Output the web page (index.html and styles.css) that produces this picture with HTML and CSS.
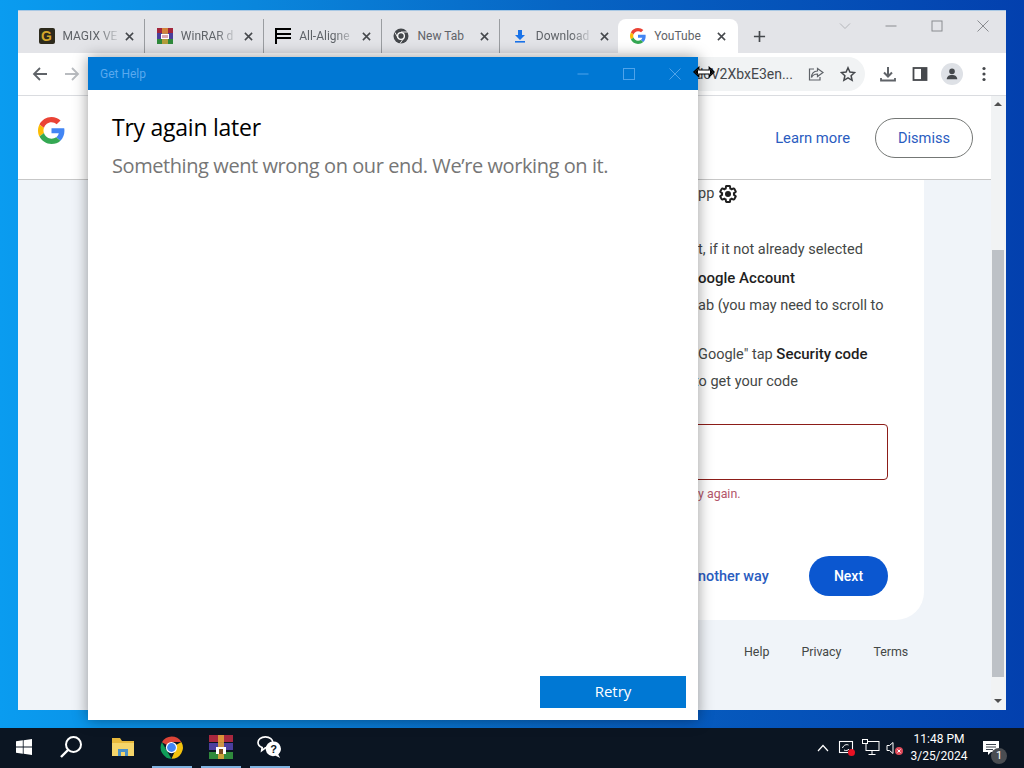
FILE: index.html
```html
<!DOCTYPE html>
<html lang="en">
<head>
  <meta charset="UTF-8" />
  <title>Get Help</title>
  <link rel="stylesheet" href="styles.css">
</head>
<body>

  <svg class="defs" width="0" height="0">
    <symbol id="x" viewBox="0 0 10 10"><path d="M1 1l8 8M9 1l-8 8" fill="none" stroke="currentColor" stroke-width="1.7"/></symbol>
    <symbol id="g" viewBox="0 0 48 48">
      <path fill="#EA4335" d="M24 9.5c3.5 0 6.700 1.200 9.200 3.600l6.900-6.900C35.900 2.400 30.400 0 24 0 14.600 0 6.500 5.400 2.600 13.200l8 6.200C12.500 13.700 17.800 9.500 24 9.500z"/>
      <path fill="#4285F4" d="M47 24.500c0-1.600-.1-3.100-.4-4.500H24v9h12.900c-.6 3-2.200 5.500-4.700 7.200l7.700 6C44.400 37.900 47 31.800 47 24.500z"/>
      <path fill="#FBBC05" d="M10.500 28.600c-.5-1.400-.8-3-.8-4.600s.3-3.200.8-4.600l-8-6.200C.900 16.500 0 20.100 0 24s.9 7.500 2.600 10.800l7.900-6.200z"/>
      <path fill="#34A853" d="M24 48c6.500 0 11.900-2.100 15.900-5.800l-7.700-6c-2.200 1.400-4.900 2.300-8.200 2.300-6.200 0-11.500-4.200-13.400-9.900l-8 6.200C6.500 42.600 14.600 48 24 48z"/>
    </symbol>
  </svg>

  <div class="desktop">

    <!-- Browser window -->
    <div class="browser">
      <div class="tabstrip">
        <div class="tab">
          <span class="fav fav-magix">G</span>
          <span class="tab-title">MAGIX VE</span>
          <svg class="tab-x"><use href="#x"/></svg>
        </div>
        <div class="tab">
          <svg class="fav" viewBox="0 0 16 16">
            <rect y="0" width="16" height="5" fill="#a3263c"/><rect y="5" width="16" height="6" fill="#4a3f9b"/><rect y="11" width="16" height="5" fill="#2f8a3c"/>
            <rect x="5" width="6" height="16" fill="#e2a33a" opacity=".75"/><rect x="4" y="6" width="8" height="5" fill="#fff"/><path d="M6 7v3M8 7v3M10 7v3" stroke="#a3263c" stroke-width=".8"/>
          </svg>
          <span class="tab-title">WinRAR d</span>
          <svg class="tab-x"><use href="#x"/></svg>
        </div>
        <div class="tab">
          <svg class="fav" viewBox="0 0 16 16"><path d="M0 0h16v2H2v3h14v2H2v2h14v2H2v5H0z" fill="#000"/></svg>
          <span class="tab-title">All-Aligne</span>
          <svg class="tab-x"><use href="#x"/></svg>
        </div>
        <div class="tab">
          <svg class="fav" viewBox="0 0 16 16">
            <circle cx="8" cy="8" r="7.500" fill="#45484c"/><circle cx="8" cy="8" r="4" fill="#fff"/><circle cx="8" cy="8" r="2.700" fill="#45484c"/>
            <path d="M8 4h6.500M5 10L2 4.500M10.500 10.500l-3.500 5" stroke="#fff" stroke-width=".9"/>
          </svg>
          <span class="tab-title tab-title-full">New Tab</span>
          <svg class="tab-x"><use href="#x"/></svg>
        </div>
        <div class="tab">
          <svg class="fav" viewBox="0 0 16 16"><path d="M6 2h4v5h3l-5 5-5-5h3z" fill="#1a73e8"/><rect x="3" y="13" width="10" height="1.600" fill="#1a73e8"/></svg>
          <span class="tab-title">Download</span>
          <svg class="tab-x"><use href="#x"/></svg>
        </div>
        <div class="tab tab-active">
          <svg class="fav"><use href="#g"/></svg>
          <span class="tab-title tab-title-full">YouTube</span>
          <svg class="tab-x"><use href="#x"/></svg>
        </div>
        <svg class="new-tab" viewBox="0 0 14 14"><path d="M7 1v12M1 7h12" stroke="#45484c" stroke-width="1.800"/></svg>
        <div class="win-controls">
          <svg viewBox="0 0 12 12"><path d="M1 3.500l5 5 5-5" fill="none" stroke="#b4b6ba" stroke-width="1"/></svg>
          <svg viewBox="0 0 12 12"><path d="M.5 6h11" stroke="#8a8c90" stroke-width="1"/></svg>
          <svg viewBox="0 0 12 12"><rect x="1" y="1" width="10" height="10" fill="none" stroke="#8a8c90" stroke-width="1"/></svg>
          <svg viewBox="0 0 12 12"><path d="M.5.5l11 11M11.500.5l-11 11" stroke="#8a8c90" stroke-width="1"/></svg>
        </div>
      </div>

      <div class="toolbar">
        <svg class="nav-btn" viewBox="0 0 16 16"><path d="M15 8H2M8 2L2 8l6 6" fill="none" stroke="#5f6368" stroke-width="1.800"/></svg>
        <svg class="nav-btn" viewBox="0 0 16 16"><path d="M1 8h13M8 2l6 6-6 6" fill="none" stroke="#b9bcc0" stroke-width="1.800"/></svg>
        <div class="omnibox">
          <span class="url">dcV2XbxE3en...</span>
          <svg class="omni-icon" viewBox="0 0 16 16"><path d="M9.500 2.500L15 6.500l-5.500 4V8C6 8 4.500 9.500 3.500 11.500 3.500 8 5.500 5 9.500 5z" fill="none" stroke="#5f6368" stroke-width="1.200"/><path d="M6 3H1.500v11H12v-3" fill="none" stroke="#5f6368" stroke-width="1.200"/></svg>
          <svg class="omni-icon" viewBox="0 0 16 16"><path d="M8 1.800l1.900 4.300 4.700.5-3.500 3.100 1 4.600L8 11.900l-4.100 2.400 1-4.600-3.500-3.100 4.700-.5z" fill="none" stroke="#45484c" stroke-width="1.500"/></svg>
        </div>
        <div class="tool-icons">
          <svg viewBox="0 0 16 16"><path d="M8 1v9M4 6.500L8 10.500l4-4" fill="none" stroke="#5f6368" stroke-width="2"/><path d="M1 12v2.500h14V12" fill="none" stroke="#5f6368" stroke-width="1.800"/></svg>
          <svg viewBox="0 0 16 16"><rect x="1.500" y="2" width="13" height="12" fill="none" stroke="#45484c" stroke-width="1.800"/><rect x="9" y="2" width="6" height="12" fill="#45484c"/></svg>
          <span class="avatar">
            <svg viewBox="0 0 16 16"><circle cx="8" cy="5" r="3.200" fill="#45484c"/><path d="M2 14c0-3.500 2.500-5 6-5s6 1.500 6 5z" fill="#45484c"/></svg>
          </span>
          <svg viewBox="0 0 16 16"><circle cx="8" cy="2.500" r="1.600" fill="#45484c"/><circle cx="8" cy="8" r="1.600" fill="#45484c"/><circle cx="8" cy="13.500" r="1.600" fill="#45484c"/></svg>
        </div>
      </div>

      <div class="page">
        <div class="page-main">
          <div class="banner">
            <svg class="banner-logo"><use href="#g"/></svg>
            <a class="learn-more">Learn more</a>
            <button class="dismiss">Dismiss</button>
          </div>

          <div class="card">
            <p class="step step-first">pp
              <svg class="gear" viewBox="0 0 24 24"><path d="M19.140 12.940c.04-.3.06-.61.06-.94 0-.32-.02-.64-.07-.94l2.030-1.580c.18-.14.23-.41.12-.61l-1.920-3.320c-.12-.22-.37-.29-.59-.22l-2.390.96c-.5-.38-1.030-.7-1.620-.94l-.36-2.540c-.04-.24-.24-.41-.48-.41h-3.840c-.24 0-.43.17-.47.41l-.36 2.540c-.59.24-1.130.57-1.620.94l-2.390-.96c-.22-.08-.47 0-.59.22L2.740 8.870c-.12.21-.08.47.12.61l2.030 1.580c-.05.3-.09.63-.09.94s.02.64.07.94l-2.030 1.580c-.18.14-.23.41-.12.61l1.920 3.320c.12.22.37.29.59.22l2.390-.96c.5.38 1.030.7 1.620.94l.36 2.540c.05.24.24.41.48.41h3.840c.24 0 .44-.17.47-.41l.36-2.540c.59-.24 1.130-.56 1.620-.94l2.390.96c.22.08.47 0 .59-.22l1.920-3.320c.12-.22.07-.47-.12-.61l-2.010-1.580z" fill="none" stroke="#1f1f1f" stroke-width="2.400"/><circle cx="12" cy="12" r="3.600" fill="#1f1f1f"/></svg>
            </p>
            <p class="step step-gap">t, if it not already selected</p>
            <p class="step"><b>oogle Account</b></p>
            <p class="step">ab (you may need to scroll to</p>
            <p class="step step-gap-sm">Google" tap <b>Security code</b></p>
            <p class="step step-under">to get your code</p>
            <div class="code-input"></div>
            <p class="code-error">y again.</p>
            <div class="actions">
              <a class="other-way">nother way</a>
              <button class="next">Next</button>
            </div>
          </div>

          <div class="footer-links">
            <span>Help</span>
            <span>Privacy</span>
            <span>Terms</span>
          </div>
        </div>

        <div class="scrollbar">
          <span class="arrow arrow-up"></span>
          <div class="thumb"></div>
          <span class="arrow arrow-down"></span>
        </div>
      </div>
    </div>

    <!-- Get Help dialog -->
    <div class="dialog">
      <div class="dialog-bar">
        <span class="dialog-name">Get Help</span>
        <div class="dialog-controls">
          <svg viewBox="0 0 12 12"><path d="M.5 6h11" stroke="#4fa3ea" stroke-width="1"/></svg>
          <svg viewBox="0 0 12 12"><rect x=".5" y=".5" width="11" height="11" fill="none" stroke="#4fa3ea" stroke-width="1"/></svg>
          <svg viewBox="0 0 12 12"><path d="M.5.500l11 11M11.500.5l-11 11" stroke="#4fa3ea" stroke-width="1"/></svg>
        </div>
      </div>
      <div class="dialog-body">
        <h1>Try again later</h1>
        <p>Something went wrong on our end. We’re working on it.</p>
      </div>
      <div class="dialog-foot">
        <button class="retry">Retry</button>
      </div>
    </div>

    <svg class="cursor" viewBox="0 0 22 12"><path d="M.8 6l5-4.700V4h10.400V1.300l5 4.700-5 4.700V8H5.800v2.700z" fill="#fff" stroke="#000" stroke-width="1.200"/><path d="M1.500 6l3.500-3.300v6.600zM20.500 6L17 2.700v6.600z" fill="#000"/></svg>
  </div>

  <!-- Taskbar -->
  <div class="taskbar">
    <div class="task-apps">
      <div class="task-app task-start">
        <svg class="ico-start" viewBox="0 0 16 16"><path d="M0 2.300l6.800-1v6.300H0zM7.600 1.200L16 0v7.600H7.600zM0 8.400h6.800v6.300L0 13.700zM7.600 8.400H16V16l-8.400-1.200z" fill="#fff"/></svg>
      </div>
      <div class="task-app task-search">
        <svg class="ico-search" viewBox="0 0 24 24"><circle cx="14.500" cy="9.500" r="7.500" fill="none" stroke="#fff" stroke-width="2"/><path d="M9 15l-7 7" stroke="#fff" stroke-width="2.400"/></svg>
      </div>
      <div class="task-app">
        <svg class="ico-folder" viewBox="0 0 22 20"><path d="M0 1h8l2 3h12v15H0z" fill="#e8b93c"/><rect y="6" width="22" height="13" fill="#f5d56a"/><rect x="6" y="12" width="10" height="7" fill="#4a90c8"/><rect x="9" y="15" width="4" height="4" fill="#f5d56a"/></svg>
      </div>
      <div class="task-app task-open">
        <svg class="ico-chrome" viewBox="0 0 48 48">
          <path d="M24 24L7 14.500A20 20 0 0 1 41.500 14H24z" fill="#db4437"/>
          <path d="M24 24l17.500-10A20 20 0 0 1 24 44l9-20z" fill="#f4c20d"/>
          <path d="M24 44A20 20 0 0 1 7 14.500L16 30z" fill="#0f9d58"/>
          <circle cx="24" cy="24" r="10" fill="#fff"/><circle cx="24" cy="24" r="7.800" fill="#4285f4"/>
        </svg>
      </div>
      <div class="task-app task-open">
        <svg class="ico-rar" viewBox="0 0 24 24">
          <rect width="24" height="7" fill="#a8283f"/><rect y="8" width="24" height="7" fill="#4b3e9e"/><rect y="17" width="24" height="7" fill="#2f8a3c"/>
          <rect x="9" y="0" width="6" height="24" fill="#e4a63a" opacity=".85"/><rect x="7" y="12" width="10" height="7" fill="#fff"/><rect x="10" y="14" width="4" height="5" fill="#7a4a20"/>
        </svg>
      </div>
      <div class="task-app task-open">
        <svg class="ico-help" viewBox="0 0 28 26"><path d="M9 2c5 0 8 3 8 6s-3 6-8 6l-4 3 .5-3.500C3 12.500 1 10.500 1 8c0-3 3-6 8-6z" fill="none" stroke="#fff" stroke-width="1.800"/><path d="M18 7a8 8 0 0 1 5 14l2 4-5-2.500A8 8 0 1 1 18 7z" fill="#fff"/><text x="18" y="20" class="ico-help-mark">?</text></svg>
      </div>
    </div>

    <div class="tray">
      <svg class="tray-chevron" viewBox="0 0 12 8"><path d="M1 7l5-5.500L11 7" fill="none" stroke="#fff" stroke-width="1.200"/></svg>
      <svg class="tray-icon" viewBox="0 0 18 18"><rect x="1.500" y="2.500" width="13" height="11" fill="none" stroke="#fff" stroke-width="1.100"/><path d="M4.500 9c1-3 4-4 6-3M11 10c-1 1.500-3 2-5 1" fill="none" stroke="#fff"/><circle cx="13.500" cy="13.500" r="3.500" fill="#e81123"/></svg>
      <svg class="tray-icon" viewBox="0 0 18 18"><rect x="4" y="2.500" width="13" height="9" fill="none" stroke="#fff"/><rect x=".5" y=".5" width="5" height="4" fill="#0b1522" stroke="#fff"/><path d="M10 11.500v4M6.500 15.500h7" stroke="#fff"/></svg>
      <svg class="tray-icon" viewBox="0 0 18 18"><path d="M1 6.500h2.500L7 3.500v11l-3.500-3H1z" fill="none" stroke="#fff"/><circle cx="13" cy="12" r="4" fill="#e04b5a"/><path d="M11.500 10.500l3 3M14.500 10.500l-3 3" stroke="#fff"/></svg>
      <div class="clock">
        <span>11:48 PM</span>
        <span>3/25/2024</span>
      </div>
      <div class="notify">
        <svg viewBox="0 0 16 15"><path d="M0 0h16v11H8l-3 3v-3H0z" fill="#fff"/><path d="M3 3.500h10M3 6h10M3 8.500h7" stroke="#0b1522" stroke-width=".8"/></svg>
        <span class="notify-badge">1</span>
      </div>
    </div>
  </div>

</body>
</html>
```

FILE: styles.css
```css
* { box-sizing: border-box; }

html, body {
  margin: 0;
  height: 768px;
  overflow: hidden;
}

body {
  display: flex;
  flex-direction: column;
  font-family: 'Roboto', 'Liberation Sans', sans-serif;
  color: #1f1f1f;
}

.defs { position: absolute; }

.desktop {
  position: relative;
  flex: 1;
  background: linear-gradient(90deg, #0a9cf0 0%, #0a86dc 25%, #0765c4 55%, #0340ae 100%);
}

/* Browser window */
.browser {
  position: absolute;
  left: 18px;
  top: 10px;
  width: 988px;
  height: 700px;
  display: flex;
  flex-direction: column;
  background: #fff;
}

.tabstrip {
  position: relative;
  display: flex;
  align-items: flex-end;
  height: 43px;
  padding-left: 9px;
  background: #e3e4e8;
  border-top: 1px solid #a9c8e4;
}

.tab {
  display: flex;
  align-items: center;
  width: 118.33px;
  height: 34px;
  padding: 0 10px 0 11.5px;
  border-right: 1px solid #9a9da1;
  font-size: 12px;
  color: #5f6368;
}

.tab:nth-child(5) { border-right: none; }

.tab-active {
  width: 120px;
  margin-left: -0.5px;
  padding-left: 12px;
  padding-right: 12px;
  background: #fff;
  border-right: none;
  border-radius: 8px 8px 0 0;
}

.fav {
  flex: none;
  width: 16px;
  height: 16px;
  margin-right: 8px;
}

.fav-magix {
  background: #2d2a1c;
  border-radius: 2px;
  color: #d4a62a;
  font: bold 14px/16px 'Liberation Sans', sans-serif;
  text-align: center;
}

.tab-title {
  flex: 1;
  white-space: nowrap;
  -webkit-mask-image: linear-gradient(90deg, #000 35px, transparent 58px);
  mask-image: linear-gradient(90deg, #000 35px, transparent 58px);
}

.tab-title-full {
  -webkit-mask-image: none;
  mask-image: none;
}

.tab-x {
  flex: none;
  width: 9px;
  height: 9px;
  color: #45484c;
}

.new-tab {
  width: 13px;
  height: 13px;
  margin: 0 0 10px 14.5px;
}

.win-controls {
  display: flex;
  gap: 34px;
  margin-left: auto;
  margin-right: 17px;
  align-self: flex-start;
  padding-top: 9px;
}

.win-controls svg {
  width: 12px;
  height: 12px;
}

.toolbar {
  display: flex;
  align-items: center;
  height: 43px;
  padding: 0 14px;
  background: #fff;
  border-bottom: 1px solid #dadce0;
}

.nav-btn {
  width: 16px;
  height: 16px;
  margin-right: 16px;
}

.omnibox {
  display: flex;
  align-items: center;
  justify-content: flex-end;
  flex: 1;
  height: 34px;
  padding-right: 9px;
  margin-left: 8px;
  background: #f1f3f4;
  border-radius: 17px;
}

.url {
  font-size: 14px;
  color: #45484c;
  margin-right: 15px;
  white-space: nowrap;
}

.omni-icon {
  width: 16px;
  height: 16px;
}

.omni-icon + .omni-icon { margin-left: 16px; }

.tool-icons {
  display: flex;
  align-items: center;
  gap: 16px;
  margin-left: 15px;
}

.tool-icons > svg {
  width: 16px;
  height: 16px;
}

.avatar {
  display: flex;
  align-items: center;
  justify-content: center;
  width: 22px;
  height: 22px;
  margin: 0 -3px;
  background: #dee1e6;
  border-radius: 50%;
}

.avatar svg {
  width: 14px;
  height: 14px;
}

.page {
  flex: 1;
  display: flex;
  min-height: 0;
  background: #f0f4f9;
}

.page-main { flex: 1; }

.banner {
  display: flex;
  align-items: center;
  height: 84px;
  padding: 0 18px 0 20px;
  background: #fff;
  border-bottom: 1px solid #c7c7c7;
}

.banner-logo {
  width: 27px;
  height: 27px;
  align-self: flex-start;
  margin-top: 21px;
  margin-right: auto;
}

.learn-more {
  font-size: 14.8px;
  color: #2a5cbf;
  margin-right: 25px;
}

.dismiss {
  width: 98px;
  height: 40px;
  background: #fff;
  border: 1px solid #747775;
  border-radius: 20px;
  font: 14.6px 'Roboto', sans-serif;
  color: #2a5cbf;
}

.card {
  width: 836px;
  margin-left: 70px;
  padding: 0 36px 24px 610px;
  background: #fff;
  border-radius: 0 0 28px 28px;
}

.step {
  height: 28px;
  margin: 0;
  font-size: 14.5px;
  line-height: 28px;
  white-space: nowrap;
  color: #444746;
}

.step b {
  font-size: 15px;
  font-weight: 500;
  color: #1f1f1f;
}

.step-first {
  display: flex;
  align-items: center;
  gap: 4px;
}

.step-gap { margin-top: 28px; }
.step-gap-sm { margin-top: 20px; }
.step-under { margin-left: -4px; }

.gear {
  width: 20px;
  height: 20px;
}

.code-input {
  height: 56px;
  margin: 28px 0 0 -40px;
  border: 1px solid #8c1d18;
  border-radius: 4px;
}

.code-error {
  margin: 4px 0 0;
  font-size: 12.4px;
  line-height: 20px;
  color: #b3566a;
}

.actions {
  display: flex;
  align-items: center;
  justify-content: space-between;
  margin-top: 52px;
}

.other-way {
  font-size: 14.4px;
  font-weight: 500;
  color: #2a5cbf;
}

.next {
  width: 79px;
  height: 40px;
  background: #0b57d0;
  border: none;
  border-radius: 20px;
  font: 500 14px 'Roboto', sans-serif;
  color: #fff;
}

.footer-links {
  display: flex;
  gap: 32px;
  margin-left: 726px;
  padding-top: 22px;
  font-size: 12.4px;
  line-height: 20px;
  color: #444746;
}

.scrollbar {
  position: relative;
  width: 15px;
  background: #f1f3f4;
}

.thumb {
  position: absolute;
  left: 1px;
  right: 2px;
  top: 154px;
  height: 427px;
  background: #bdc1c6;
}

.arrow {
  position: absolute;
  left: 3px;
  border-left: 4px solid transparent;
  border-right: 4px solid transparent;
}

.arrow-up {
  top: 6px;
  border-bottom: 4px solid #505050;
}

.arrow-down {
  bottom: 7px;
  border-top: 4px solid #505050;
}

/* Get Help dialog */
.dialog {
  position: absolute;
  left: 88px;
  top: 57px;
  width: 610px;
  height: 663px;
  display: flex;
  flex-direction: column;
  background: #fff;
  box-shadow: 0 0 14px rgba(0,0,0,0.4);
}

.dialog-bar {
  display: flex;
  align-items: center;
  justify-content: space-between;
  height: 33px;
  padding: 0 17px 0 12px;
  background: #0078d4;
}

.dialog-name {
  font-size: 12px;
  color: #5aa9ee;
}

.dialog-controls {
  display: flex;
  gap: 34px;
}

.dialog-controls svg {
  width: 12px;
  height: 12px;
}

.dialog-body {
  flex: 1;
  padding: 21px 24px 0;
  font-family: 'Open Sans', sans-serif;
}

.dialog-body h1 {
  margin: 0;
  font-size: 23px;
  font-weight: 400;
  line-height: 32px;
  letter-spacing: -0.25px;
  color: #000;
}

.dialog-body p {
  margin: 10px 0 0;
  font-size: 20px;
  line-height: 26px;
  letter-spacing: -0.42px;
  color: #767676;
}

.dialog-foot {
  display: flex;
  justify-content: flex-end;
  padding: 0 12px 12px;
}

.retry {
  width: 146px;
  height: 32px;
  padding: 0 0 2px;
  background: #0078d4;
  border: none;
  font: 15px 'Open Sans', sans-serif;
  color: #fff;
}

.cursor {
  position: absolute;
  left: 693px;
  top: 66px;
  width: 22px;
  height: 12px;
}

/* Taskbar */
.taskbar {
  flex: none;
  display: flex;
  justify-content: space-between;
  height: 40px;
  background: #0b1522;
  color: #fff;
}

.task-apps { display: flex; }

.task-app {
  display: flex;
  align-items: center;
  justify-content: center;
  width: 49px;
  height: 40px;
  border-bottom: 2px solid transparent;
}

.task-start { width: 48px; }
.task-search { width: 50px; padding-right: 4px; }

.task-open {
  width: 40px;
  margin: 0 4.5px;
  border-bottom-color: #7fb2e0;
}

.ico-start { width: 16px; height: 16px; }
.ico-search { width: 24px; height: 24px; }
.ico-folder { width: 22px; height: 20px; }
.ico-chrome { width: 27px; height: 27px; }
.ico-rar { width: 24px; height: 24px; }
.ico-help { width: 26px; height: 24px; }

.ico-help-mark {
  font: bold 12px 'Liberation Sans', sans-serif;
  text-anchor: middle;
  fill: #0b1522;
}

.tray {
  display: flex;
  align-items: center;
  padding-right: 25px;
}

.tray-chevron {
  width: 12px;
  height: 8px;
  margin-right: 9px;
}

.tray-icon {
  width: 18px;
  height: 18px;
  margin-right: 6px;
}

.clock {
  display: flex;
  flex-direction: column;
  align-items: center;
  width: 54px;
  margin: 0 17px 0 2px;
  font-size: 12px;
  line-height: 17px;
}

.notify {
  position: relative;
  width: 16px;
  height: 15px;
}

.notify svg {
  display: block;
  width: 16px;
  height: 15px;
}

.notify-badge {
  position: absolute;
  left: 8px;
  top: 7px;
  width: 16px;
  height: 16px;
  background: #4a4d52;
  border-radius: 50%;
  font-size: 11px;
  line-height: 16px;
  text-align: center;
}
```
